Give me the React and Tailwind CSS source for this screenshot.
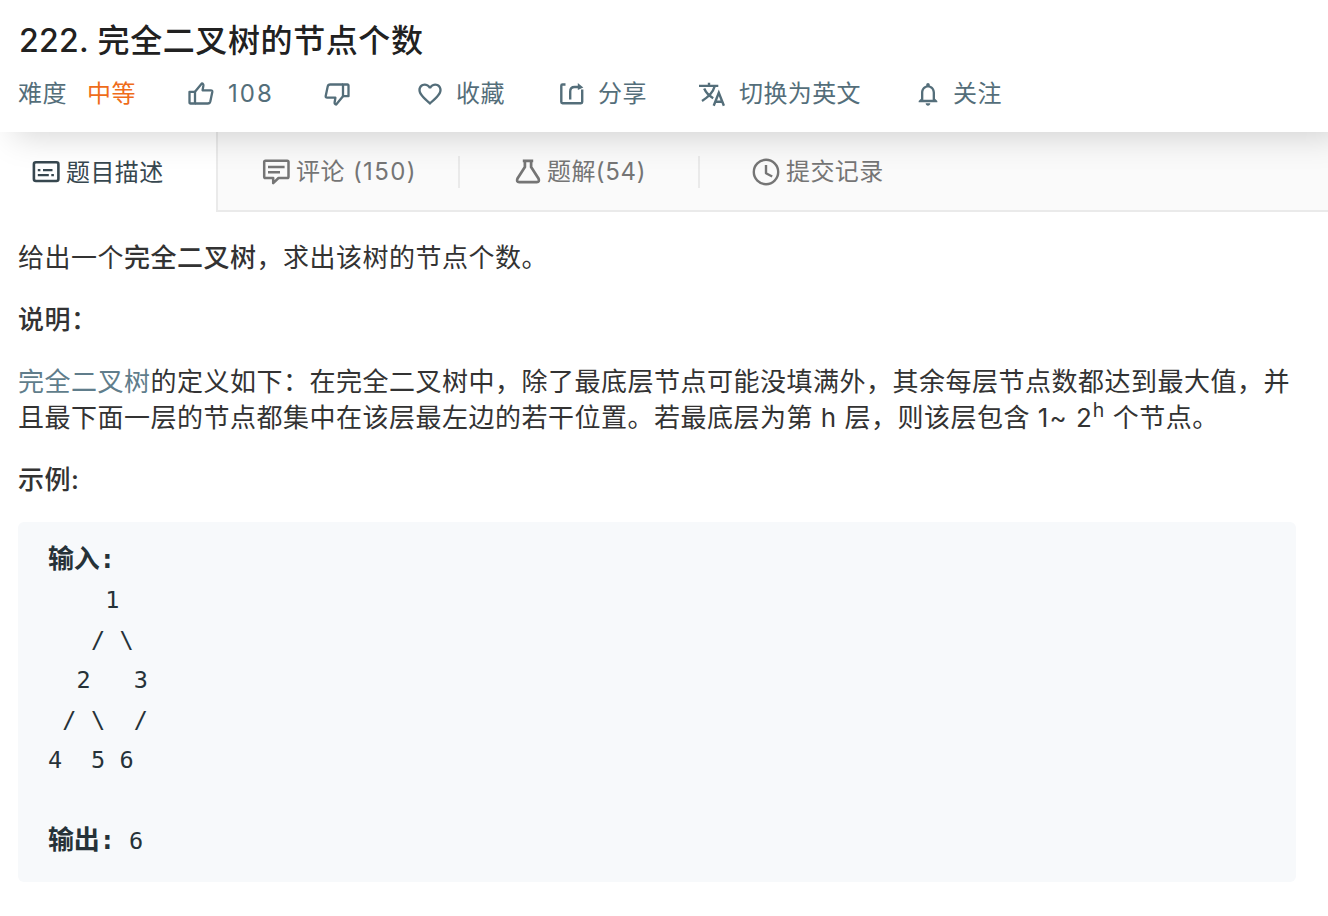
import { MdFavoriteBorder, MdNotificationsNone } from "react-icons/md";

function Icon({ children, className = "", strokeWidth = 2.4 }) {
  return (
    <svg
      viewBox="0 0 28 28"
      fill="none"
      stroke="currentColor"
      strokeWidth={strokeWidth}
      strokeLinejoin="round"
      className={`h-7 w-7 shrink-0 ${className}`}
    >
      {children}
    </svg>
  );
}

function Thumb({ className }) {
  return (
    <Icon className={className} strokeWidth={2.3}>
      <path d="M2.5 11.8H8v11.7H3.5q-1 0-1-1z" />
      <path d="M8 11.8l6.8-8.3q1.8.2 1.6 2L15.6 10.3h8.2q1.8 0 1.5 1.7l-2 9.5q-.5 2-2.5 2H8" />
    </Icon>
  );
}

function ShareIcon() {
  return (
    <Icon>
      <path d="M7.5 4.5H4.5q-1.2 0-1.2 1.2V22q0 1.2 1.2 1.2h18.5q1.2 0 1.2-1.2V9.5" />
      <path d="M12.2 19.5V11.5q0-4.5 4.3-4.5H21" />
      <path d="M19.8 3l5.5 4.5-5.5 2.5z" fill="currentColor" stroke="none" />
    </Icon>
  );
}

function TranslateIcon() {
  return (
    <Icon>
      <path d="M2 5.9h19.3M12 2.7v3M17.6 6.5C16 12.5 10.5 17.5 5 21M7.2 8.5c1.8 4.2 4.8 7.2 9 9.7" />
      <path d="M16.7 25.7l5.1-13 5.1 13M18.5 21.7h6.6" strokeLinejoin="miter" />
    </Icon>
  );
}

function DescriptionIcon() {
  return (
    <Icon strokeWidth={2.6}>
      <rect x="1.9" y="4.2" width="24.5" height="18.8" rx="2" />
      <path d="M5.8 12.2h2.6M11 12.2h9.5M5.8 17.1h11M19.3 17.1h2.6" strokeWidth="2.2" />
    </Icon>
  );
}

function CommentIcon() {
  return (
    <Icon strokeWidth={2.5}>
      <path d="M3.5 2.7h21.7q1.3 0 1.3 1.3v14.7q0 1.3-1.3 1.3H16.5L11.2 25.2V20H3.5q-1.3 0-1.3-1.3V4q0-1.3 1.3-1.3z" />
      <path d="M6 9.1h16.6M6 14.3h12" />
    </Icon>
  );
}

function FlaskIcon() {
  return (
    <Icon strokeWidth={2.7}>
      <path d="M8.8 2.8h10.4M10.9 2.8V9L3.5 20.5q-1.4 3.7 1.7 3.7h17.6q3.1 0 1.7-3.7L17.1 9V2.8" />
    </Icon>
  );
}

function ClockIcon() {
  return (
    <Icon>
      <circle cx="14" cy="14" r="12.2" />
      <path d="M14 7v8.2l6.2 3.3" />
    </Icon>
  );
}

function Header() {
  return (
    <header className="relative z-10 h-[132px] bg-white pt-5 pl-[19px] shadow-[14px_4px_32px_rgba(0,0,0,0.17)]">
      <h1 className="h-[42px] text-[32px] leading-[42px] font-medium tracking-[0.6px] whitespace-nowrap text-[#212121]">
        <span className="tracking-[0.3px]">222. </span>完全二叉树的节点个数
      </h1>
      <div className="mt-3 -ml-px flex h-10 items-center text-[24px] leading-10 tracking-[0.4px] whitespace-nowrap text-[#546e7a]">
        <span className="w-[69px]">难度</span>
        <span className="w-[100px] text-[#ef6c1a]">中等</span>
        <button className="flex w-[136px] items-center gap-[13px]">
          <Thumb />
          <span className="tracking-[2px]">108</span>
        </button>
        <button className="flex w-[93px] items-center">
          <Thumb className="rotate-180" />
        </button>
        <button className="flex w-[142px] items-center gap-[12px]">
          <MdFavoriteBorder className="h-7 w-7" />
          收藏
        </button>
        <button className="flex w-[139px] items-center gap-[12px]">
          <ShareIcon />
          分享
        </button>
        <button className="flex w-[217px] items-center gap-[14px]">
          <TranslateIcon />
          切换为英文
        </button>
        <button className="flex items-center gap-[11px]">
          <MdNotificationsNone className="h-7 w-7" />
          关注
        </button>
      </div>
    </header>
  );
}

function Tabs() {
  return (
    <nav className="flex h-20 text-[24px] leading-10 tracking-[0.4px] whitespace-nowrap">
      <button className="flex w-[216px] items-center gap-[6px] pl-8 text-[#37474f]">
        <DescriptionIcon />
        <span className="pt-px">题目描述</span>
      </button>
      <div className="flex flex-1 items-center border-b-2 border-l-2 border-[#eaeaea] bg-[#fafafa] text-[#757575]">
        <button className="mt-px flex h-8 w-[242px] items-center gap-[6px] border-r-2 border-[#eaeaea] pl-11">
          <CommentIcon />
          <span className="pt-px">
            评论<span className="tracking-[1.4px]"> (150)</span>
          </span>
        </button>
        <button className="mt-px flex h-8 w-[240px] items-center gap-[5px] border-r-2 border-[#eaeaea] pl-[54px]">
          <FlaskIcon />
          <span className="pt-px">
            题解<span className="tracking-[0.7px]">(54)</span>
          </span>
        </button>
        <button className="mt-px flex h-8 items-center gap-[6px] pl-[52px]">
          <ClockIcon />
          <span className="pt-px">提交记录</span>
        </button>
      </div>
    </nav>
  );
}

const tree = `
    1
   / \\
  2   3
 / \\  /
4  5 6

`;

export default function App() {
  return (
    <div className="h-[916px] overflow-hidden bg-white font-[Inter,'Noto_Sans_CJK_SC',sans-serif]">
      <Header />
      <Tabs />
      <main className="px-[18px] pt-7 text-[26px] leading-9 tracking-[0.5px] text-[#333]">
        <p className="mb-[26px]">
          给出一个<strong className="font-medium">完全二叉树</strong>，求出该树的节点个数。
        </p>
        <p className="mb-[26px]">
          <strong className="font-medium">说明：</strong>
        </p>
        <p className="mb-[26px]">
          <a className="text-[#607d8b]">完全二叉树</a>
          的定义如下：在完全二叉树中，除了最底层节点可能没填满外，其余每层节点数都达到最大值，并且最下面一层的节点都集中在该层最左边的若干位置。若最底层为第 h 层，则该层包含{" "}
          <span className="tracking-[1px]">1~ 2</span>
          <sup className="text-[19.5px] leading-none">h</sup> 个节点。
        </p>
        <p className="mb-6">
          <strong className="font-medium">示例:</strong>
        </p>
        <pre className="mr-[14px] h-[360px] rounded-md bg-[#f7f9fb] px-[30px] py-[17px] font-['DejaVu_Sans_Mono','Noto_Sans_CJK_SC',monospace] text-[23.5px] leading-10 tracking-[0.15px] text-[#263238]">
          <strong className="text-[26px] font-bold tracking-[-0.2px]">输入:</strong>
          {tree}
          <strong className="text-[26px] font-bold tracking-[-0.3px]">输出:</strong> 6
        </pre>
      </main>
    </div>
  );
}
